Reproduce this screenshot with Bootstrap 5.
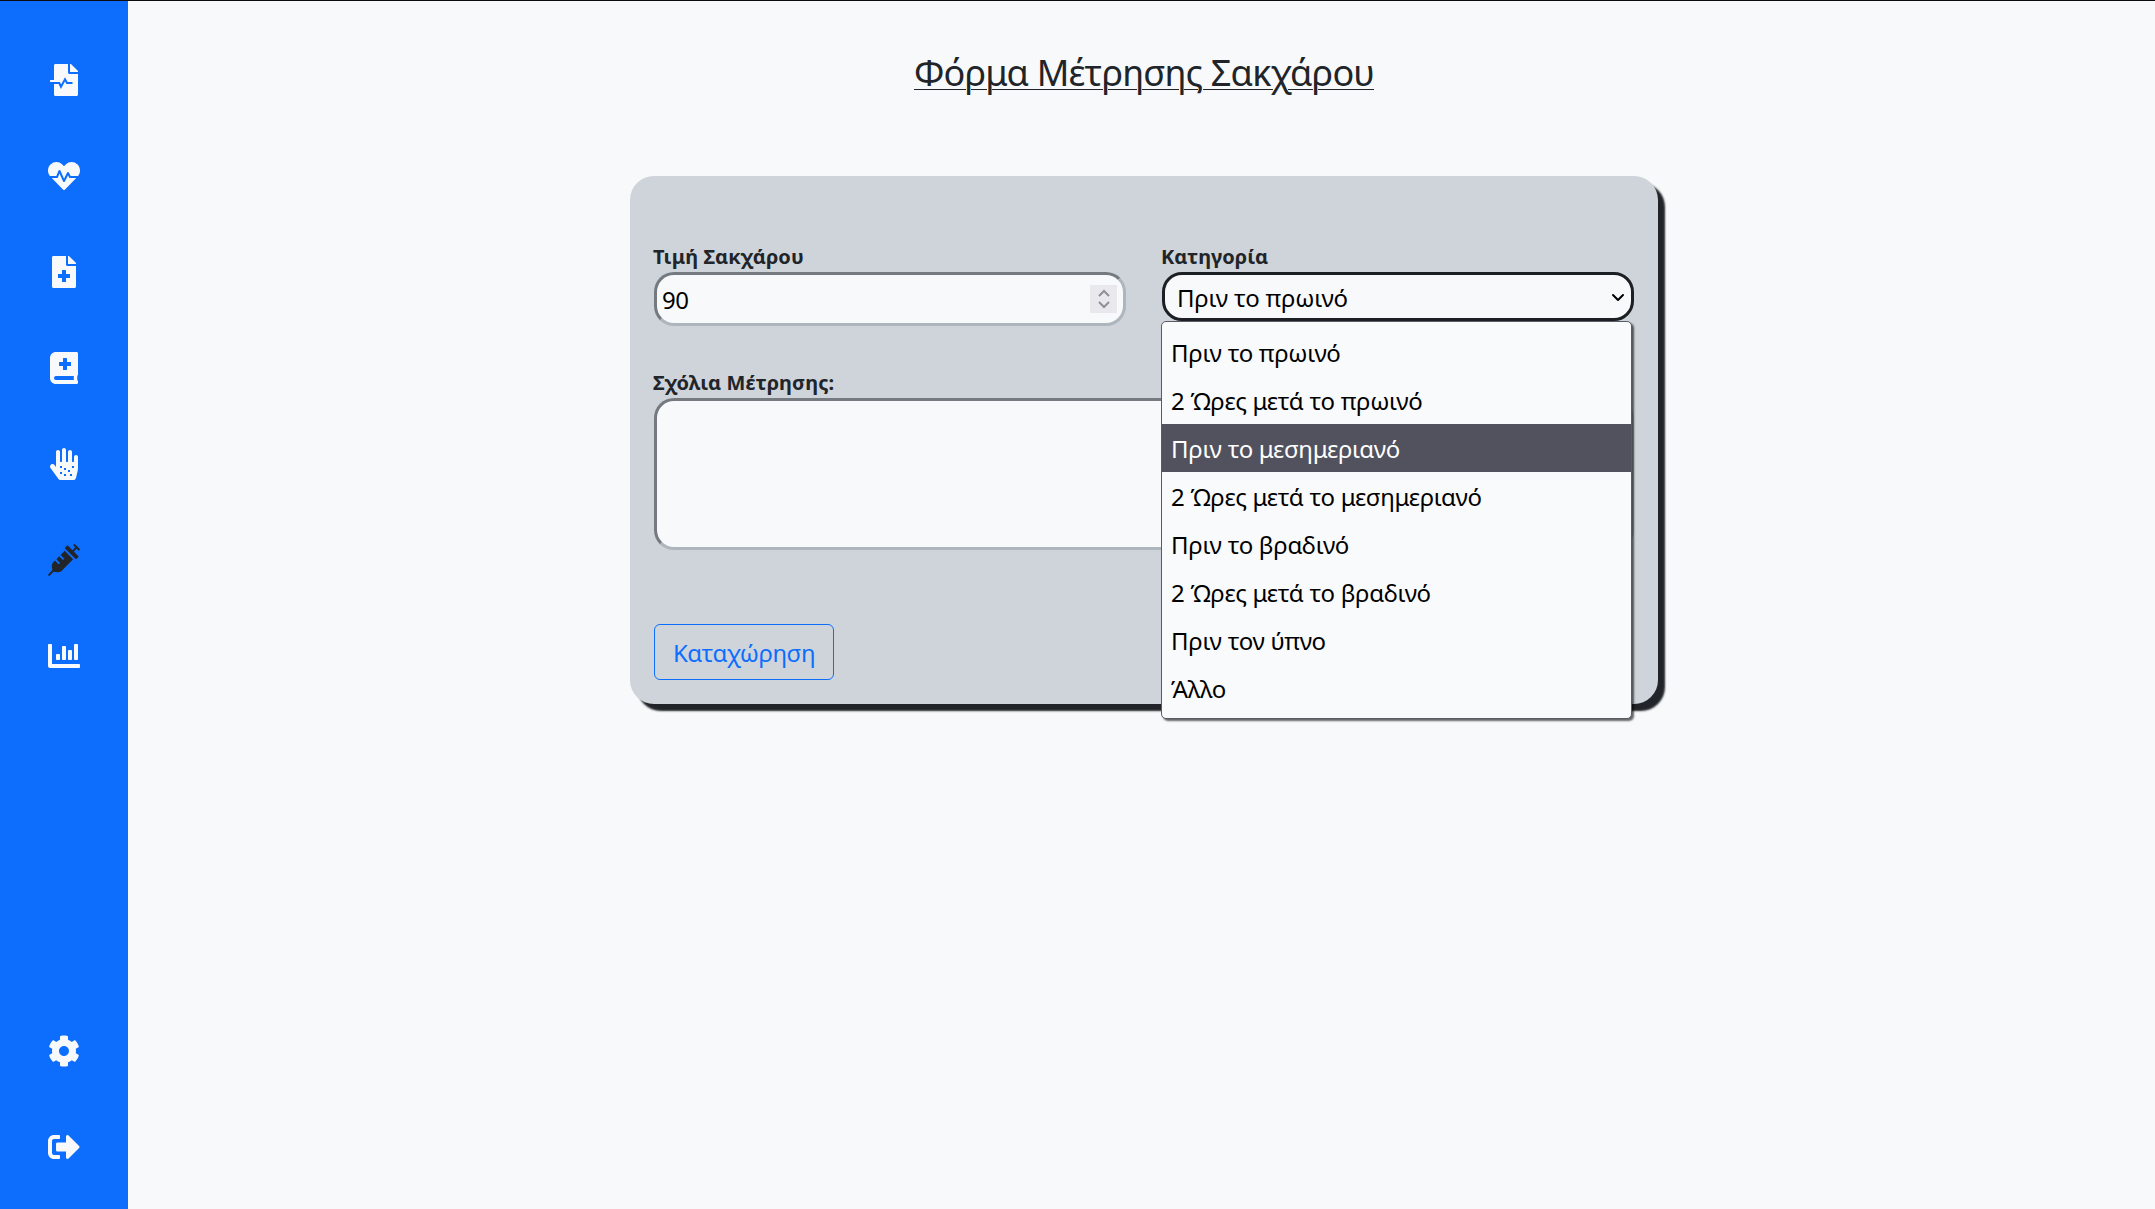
<!DOCTYPE html>
<html lang="el">
<head>
<meta charset="utf-8">
<meta name="viewport" content="width=device-width, initial-scale=1">
<title>Φόρμα Μέτρησης Σακχάρου</title>
<link href="https://cdn.jsdelivr.net/npm/bootstrap@5.3.0/dist/css/bootstrap.min.css" rel="stylesheet">
<style>
body { font-family: "Noto Sans", "Open Sans", sans-serif; font-size: 24px; height: 1209px; border-top: 1px solid #0c0c0d; overflow: hidden; }
.side-nav { width: 128px; padding: 31px 0 14.5px; }
.side-nav .nav-link { height: 96px; padding: 0; display: flex; align-items: center; justify-content: center; }
.side-nav svg { height: 32px; fill: currentColor; }
.page-main { padding: 0 0 0 5px; }
.page-title { font-size: 36px; line-height: 43px; letter-spacing: -.83px; margin: 50px 0 82px; text-decoration-thickness: 1px !important; text-underline-offset: 3px; }
.form-panel { width: 1028px; height: 528px; padding: 68px 24px 24px; border-radius: 24px; background: #ced4da; box-shadow: 7px 7px 2px #212529; }
.field-cols { gap: 36px; }
.field-label { font-size: 20px; line-height: 25px; font-weight: 700; display: block; margin-bottom: 3px; text-indent: -1px; letter-spacing: .08px; }
.field-box { border: 3px solid; border-color: #747a80 #adb5bd #adb5bd #747a80; border-radius: 20px; background: #f8f9fa; color: #000; width: 100%; display: block; outline: 0; }
.value-input { height: 54px; padding: 0 40px 0 5px; letter-spacing: -.5px; appearance: textfield; -moz-appearance: textfield; }
.value-input::-webkit-inner-spin-button { appearance: none; }
.spin-box { right: 9px; top: 13px; width: 27px; height: 28px; background: #e9e9ed; }
.cat-select { height: 49px; padding: 2px 40px 0 12px; border-color: #1c1f23; appearance: none; letter-spacing: -.2px; }
.cat-arrow { right: 9px; top: 21px; }
.cat-menu { left: -1px; top: 49px; width: 471px; padding: 6px 0; border: 1px solid #5b5b66; border-radius: 5px; background: #f9fafb; box-shadow: 2px 2px 2px rgba(0,0,0,.6); z-index: 5; color: #000; letter-spacing: -.28px; }
.cat-menu li { height: 48px; line-height: 50px; padding-left: 9px; white-space: nowrap; }
.cat-menu li.picked { background: #52525e; color: #fff; }
.comment-area { height: 152px; resize: none; }
.notes-label { margin-top: 44px; }
.send-btn { width: 180px; height: 56px; font-size: 24px; padding: 2px 0 0; border-radius: 6px; margin-top: 74px; letter-spacing: -.45px; }
</style>
</head>
<body class="d-flex bg-light">
<nav class="side-nav bg-primary flex-shrink-0 d-flex flex-column justify-content-between">
  <div class="nav flex-column">
    <a class="nav-link text-light" href="#"><svg viewBox="0 0 448 512"><path d="M288 136V0H88C74.700 0 64 10.700 64 24v232H8a8 8 0 0 0-8 8v16a8 8 0 0 0 8 8h56v200c0 13.300 10.700 24 24 24h336c13.300 0 24-10.700 24-24V160H312c-13.200 0-24-10.800-24-24zm153-31L343.100 7c-4.500-4.500-10.600-7-17-7H320v128h128v-6.100c0-6.300-2.500-12.400-7-16.900z"/><path d="M60 304h88l28 60 64-120 32 60h88" fill="none" stroke="#0d6efd" stroke-width="32"/></svg></a>
    <a class="nav-link text-light" href="#"><svg viewBox="0 0 512 512"><path d="M320.200 243.800l-49.700 99.400c-6 12.100-23.400 11.700-28.900-.6l-56.900-126.300-30 71.700H60.600l182.500 186.500c7.100 7.300 18.600 7.300 25.700 0L451.400 288H342.300l-22.100-44.200zM473.700 73.900l-2.400-2.500c-51.500-52.600-135.800-52.600-187.400 0L256 100l-27.900-28.500c-51.500-52.700-135.900-52.700-187.400 0l-2.400 2.400C-10.400 123.700-12.500 203 31 256h102.400l35.900-86.200c5.400-12.900 23.600-13.100 29.200-.4l58.200 129.300 49-97.900c5.900-11.800 22.700-11.800 28.600 0l27.600 55.200H481c43.500-53 41.400-132.300-7.300-182.100z"/></svg></a>
    <a class="nav-link text-light" href="#"><svg viewBox="0 0 384 512"><path fill-rule="evenodd" d="M377 105L279.100 7c-4.500-4.500-10.600-7-17-7H256v128h128v-6.100c0-6.300-2.500-12.400-7-16.900zM224 136V0H24C10.700 0 0 10.700 0 24v464c0 13.300 10.700 24 24 24h336c13.300 0 24-10.700 24-24V160H248c-13.200 0-24-10.800-24-24zM160 232a8 8 0 0 1 8-8h48a8 8 0 0 1 8 8v56h56a8 8 0 0 1 8 8v48a8 8 0 0 1-8 8h-56v56a8 8 0 0 1-8 8h-48a8 8 0 0 1-8-8v-56h-56a8 8 0 0 1-8-8v-48a8 8 0 0 1 8-8h56z"/></svg></a>
    <a class="nav-link text-light" href="#"><svg viewBox="0 0 448 512"><path fill-rule="evenodd" d="M448 358.400V25.600c0-16-9.600-25.600-25.600-25.600H96C41.600 0 0 41.600 0 96v320c0 54.400 41.600 96 96 96h326.400c12.800 0 25.600-9.600 25.600-25.600v-16c0-6.400-3.200-12.800-9.600-19.200-3.200-16-3.200-60.800 0-73.600 6.400-3.200 9.600-9.600 9.600-19.200zM208 104a8 8 0 0 1 8-8h48a8 8 0 0 1 8 8v56h56a8 8 0 0 1 8 8v48a8 8 0 0 1-8 8h-56v56a8 8 0 0 1-8 8h-48a8 8 0 0 1-8-8v-56h-56a8 8 0 0 1-8-8v-48a8 8 0 0 1 8-8h56zM380.800 448H96c-19.200 0-32-12.800-32-32s16-32 32-32h284.800z"/></svg></a>
    <a class="nav-link text-light" href="#"><svg viewBox="0 0 448 512"><path fill-rule="evenodd" d="M416 112c-17.600 0-32 14.400-32 32v72c0 4.400-3.600 8-8 8h-16c-4.400 0-8-3.600-8-8V64c0-17.600-14.400-32-32-32s-32 14.400-32 32v152c0 4.400-3.600 8-8 8h-16c-4.400 0-8-3.600-8-8V32c0-17.600-14.400-32-32-32s-32 14.400-32 32v184c0 4.400-3.600 8-8 8h-16c-4.400 0-8-3.600-8-8V64c0-17.600-14.400-32-32-32S96 46.400 96 64v241l-23.600-32.500c-13-17.900-38-21.800-55.900-8.800S-5.300 301.700 7.700 319.600l125.600 172.700C142.300 504.700 156.700 512 172 512h197.600c22.300 0 41.600-15.300 46.700-37l26.500-112.700c3.500-14.700 5.200-29.700 5.200-44.800V144c0-17.600-14.400-32-32-32zM160 288h32v32h-32zM352 288h32v32h-32zM224 320h32v32h-32zM288 352h32v32h-32zM160 384h32v32h-32zM224 416h32v32h-32zM320 416h32v32h-32z"/></svg></a>
    <a class="nav-link text-dark" href="#"><svg viewBox="0 0 512 512"><path d="M201.500 174.800l55.700 55.800c3.100 3.100 3.100 8.200 0 11.300l-11.300 11.300c-3.100 3.100-8.200 3.100-11.300 0l-55.700-55.800-45.300 45.300 55.800 55.800c3.100 3.100 3.100 8.200 0 11.300l-11.300 11.300c-3.100 3.100-8.200 3.100-11.300 0L111 265.200l-26.400 26.400c-17.300 17.300-25.600 41.100-23 65.400l7.100 63.600L2.300 487c-3.100 3.100-3.100 8.200 0 11.300l11.300 11.300c3.100 3.100 8.200 3.100 11.300 0l66.300-66.300 63.600 7.100c23.900 2.600 47.900-5.400 65.400-23l181.900-181.900-135.700-135.700-64.900 65zm308.200-93.300L430.500 2.300c-3.100-3.100-8.200-3.100-11.300 0l-11.300 11.300c-3.100 3.100-3.100 8.200 0 11.300l28.300 28.300-45.300 45.300-56.600-56.600-17-17c-3.100-3.100-8.200-3.100-11.300 0l-33.900 33.900c-3.100 3.100-3.100 8.200 0 11.300l17 17L424.800 223l17 17c3.100 3.100 8.200 3.100 11.300 0l33.900-34c3.100-3.100 3.100-8.200 0-11.300l-73.500-73.500 45.300-45.300 28.300 28.300c3.100 3.100 8.200 3.100 11.300 0l11.300-11.300c3.100-3.200 3.100-8.200 0-11.400z"/></svg></a>
    <a class="nav-link text-light" href="#"><svg viewBox="0 0 512 512"><path d="M332.800 320h38.400c6.400 0 12.800-6.400 12.800-12.800V172.800c0-6.400-6.400-12.800-12.800-12.800h-38.400c-6.400 0-12.800 6.400-12.800 12.800v134.400c0 6.400 6.400 12.800 12.800 12.800zm96 0h38.400c6.400 0 12.800-6.400 12.800-12.800V76.800c0-6.400-6.400-12.800-12.800-12.800h-38.400c-6.400 0-12.800 6.400-12.800 12.800v230.400c0 6.400 6.400 12.800 12.800 12.800zm-288 0h38.400c6.400 0 12.800-6.400 12.800-12.800v-70.400c0-6.400-6.400-12.800-12.800-12.800h-38.400c-6.400 0-12.800 6.400-12.800 12.800v70.400c0 6.400 6.400 12.800 12.800 12.800zm96 0h38.400c6.400 0 12.800-6.400 12.800-12.800V108.800c0-6.400-6.400-12.800-12.800-12.800h-38.400c-6.400 0-12.800 6.400-12.800 12.800v198.400c0 6.400 6.400 12.800 12.800 12.800zM496 384H64V80c0-8.840-7.160-16-16-16H16C7.160 64 0 71.160 0 80v336c0 17.670 14.330 32 32 32h464c8.840 0 16-7.160 16-16v-32c0-8.840-7.160-16-16-16z"/></svg></a>
  </div>
  <div class="nav flex-column">
    <a class="nav-link text-light" href="#"><svg viewBox="0 0 512 512"><path d="M487.400 315.700l-42.600-24.600c4.300-23.200 4.300-47 0-70.200l42.600-24.600c4.900-2.800 7.100-8.600 5.500-14-11.100-35.600-30-67.800-54.700-94.600-3.800-4.100-10-5.100-14.800-2.300L380.800 110c-17.900-15.400-38.500-27.300-60.800-35.100V25.800c0-5.600-3.900-10.500-9.400-11.700-36.700-8.200-74.300-7.800-109.200 0-5.500 1.200-9.400 6.100-9.400 11.700V75c-22.200 7.900-42.800 19.800-60.800 35.100L88.700 85.500c-4.900-2.800-11-1.900-14.800 2.300-24.700 26.700-43.600 58.900-54.700 94.600-1.700 5.400.6 11.200 5.500 14L67.300 221c-4.300 23.200-4.300 47 0 70.200l-42.600 24.600c-4.900 2.800-7.100 8.600-5.500 14 11.100 35.600 30 67.800 54.700 94.600 3.800 4.100 10 5.100 14.800 2.300l42.600-24.600c17.900 15.400 38.500 27.300 60.800 35.100v49.200c0 5.600 3.900 10.500 9.400 11.700 36.700 8.200 74.300 7.800 109.200 0 5.500-1.200 9.400-6.100 9.400-11.700v-49.200c22.200-7.900 42.800-19.800 60.800-35.100l42.600 24.600c4.900 2.800 11 1.900 14.800-2.300 24.700-26.700 43.600-58.900 54.700-94.600 1.500-5.500-.7-11.300-5.600-14.100zM256 336c-44.100 0-80-35.900-80-80s35.900-80 80-80 80 35.900 80 80-35.900 80-80 80z"/></svg></a>
    <a class="nav-link text-light" href="#"><svg viewBox="0 0 512 512"><path d="M497 273L329 441c-15 15-41 4.500-41-17v-96H152c-13.300 0-24-10.700-24-24v-96c0-13.300 10.700-24 24-24h136V88c0-21.400 25.900-32 41-17l168 168c9.300 9.400 9.300 24.600 0 34zM192 436v-40c0-6.600-5.400-12-12-12H96c-17.700 0-32-14.300-32-32V160c0-17.700 14.300-32 32-32h84c6.600 0 12-5.400 12-12V76c0-6.600-5.400-12-12-12H96c-53 0-96 43-96 96v192c0 53 43 96 96 96h84c6.600 0 12-5.400 12-12z"/></svg></a>
  </div>
</nav>
<main class="page-main flex-grow-1 d-flex flex-column align-items-center">
  <h1 class="page-title fw-normal text-decoration-underline text-dark">Φόρμα Μέτρησης Σακχάρου</h1>
  <form class="form-panel">
    <div class="field-cols d-flex">
      <div class="flex-fill w-50">
        <label class="field-label" for="val">Τιμή Σακχάρου</label>
        <div class="position-relative">
          <input class="field-box value-input" id="val" type="number" value="90">
          <span class="spin-box position-absolute d-flex align-items-center justify-content-center"><svg width="12" height="20" viewBox="0 0 12 20" fill="none" stroke="#8f8f9d" stroke-width="2"><path d="M1 7l5-5 5 5M1 13l5 5 5-5"/></svg></span>
        </div>
      </div>
      <div class="flex-fill w-50">
        <label class="field-label" for="cat">Κατηγορία</label>
        <div class="position-relative">
          <select class="field-box cat-select" id="cat"><option>Πριν το πρωινό</option></select>
          <svg class="cat-arrow position-absolute" width="14" height="9" viewBox="0 0 14 9" fill="none" stroke="#000" stroke-width="2" stroke-linecap="round" stroke-linejoin="round"><path d="M2 2l5 5 5-5"/></svg>
          <ul class="cat-menu position-absolute list-unstyled m-0">
            <li>Πριν το πρωινό</li>
            <li>2 Ώρες μετά το πρωινό</li>
            <li class="picked">Πριν το μεσημεριανό</li>
            <li>2 Ώρες μετά το μεσημεριανό</li>
            <li>Πριν το βραδινό</li>
            <li>2 Ώρες μετά το βραδινό</li>
            <li>Πριν τον ύπνο</li>
            <li>Άλλο</li>
          </ul>
        </div>
      </div>
    </div>
    <label class="field-label notes-label" for="notes">Σχόλια Μέτρησης:</label>
    <textarea class="field-box comment-area" id="notes"></textarea>
    <button class="send-btn btn btn-outline-primary" type="button">Καταχώρηση</button>
  </form>
</main>
<script src="https://cdn.jsdelivr.net/npm/bootstrap@5.3.0/dist/js/bootstrap.bundle.min.js"></script>
</body>
</html>
